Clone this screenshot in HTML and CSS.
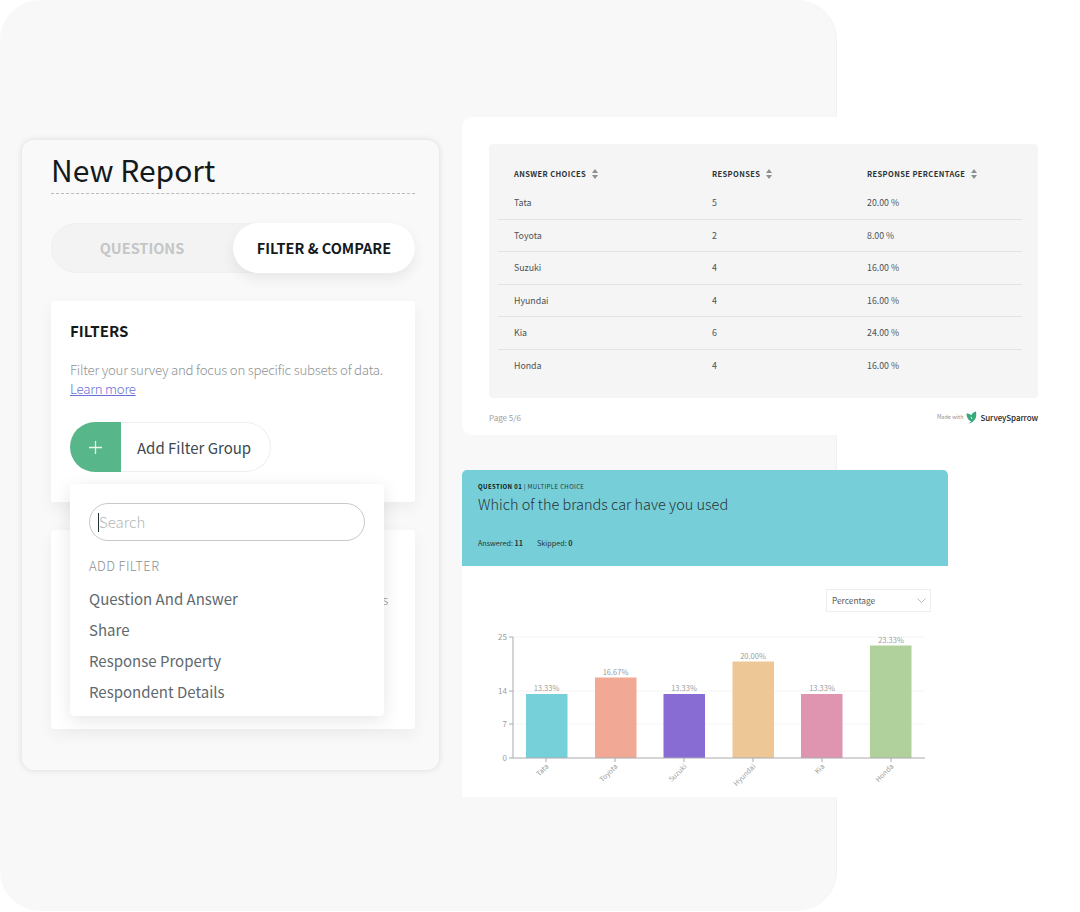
FILE: index.html
```html
<!DOCTYPE html>
<html lang="en">
<head>
    <meta charset="UTF-8">
    <meta name="viewport" content="width=device-width, initial-scale=1.0">
    <title>New Report</title>
    <link rel="stylesheet" href="styles.css">
</head>
<body>
    <div class="stage">
        <div class="panel">
            <div class="report-card">
                <h1 class="report-title">New Report</h1>

                <div class="toggle">
                    <span class="toggle-item">QUESTIONS</span>
                    <span class="toggle-item active">FILTER &amp; COMPARE</span>
                </div>

                <div class="box filters-box">
                    <h2>FILTERS</h2>
                    <p class="box-text">Filter your survey and focus on specific subsets of data.<br><a href="#">Learn more</a></p>
                    <div class="add-group">
                        <span class="add-icon">
                            <svg width="15" height="15" viewBox="0 0 15 15"><path d="M7.5 1v13M1 7.5h13" stroke="#e6f5ee" stroke-width="1.3" fill="none"/></svg>
                        </span>
                        <span class="add-label">Add Filter Group</span>
                    </div>
                </div>

                <div class="box compare-box">
                    <p class="compare-text">subsets</p>
                </div>

                <div class="filter-menu">
                    <div class="search-input"><span class="caret"></span>Search</div>
                    <div class="menu-heading">ADD FILTER</div>
                    <ul class="menu-list">
                        <li>Question And Answer</li>
                        <li>Share</li>
                        <li>Response Property</li>
                        <li>Respondent Details</li>
                    </ul>
                </div>
            </div>
        </div>

        <div class="sheet table-sheet">
            <div class="table-box">
                <div class="table-row table-head">
                    <span>ANSWER CHOICES <svg class="sort" width="6" height="10" viewBox="0 0 6 10"><path d="M3 0l3 4H0zM3 10L0 6h6z"/></svg></span>
                    <span>RESPONSES <svg class="sort" width="6" height="10" viewBox="0 0 6 10"><path d="M3 0l3 4H0zM3 10L0 6h6z"/></svg></span>
                    <span>RESPONSE PERCENTAGE <svg class="sort" width="6" height="10" viewBox="0 0 6 10"><path d="M3 0l3 4H0zM3 10L0 6h6z"/></svg></span>
                </div>
                <div class="table-row"><span>Tata</span><span>5</span><span>20.00 %</span></div>
                <div class="table-row"><span>Toyota</span><span>2</span><span>8.00 %</span></div>
                <div class="table-row"><span>Suzuki</span><span>4</span><span>16.00 %</span></div>
                <div class="table-row"><span>Hyundai</span><span>4</span><span>16.00 %</span></div>
                <div class="table-row"><span>Kia</span><span>6</span><span>24.00 %</span></div>
                <div class="table-row"><span>Honda</span><span>4</span><span>16.00 %</span></div>
            </div>
            <div class="sheet-footer">
                <span class="page-num">Page 5/6</span>
                <span class="made-with">Made with
                    <svg width="11" height="13" viewBox="0 0 11 13"><path d="M.5 2.500c2 0 3.500.6 4.800 1.800C6 2.500 7.500 1 10 .5c.6 4 .3 7.300-2.500 9.500-1.600 1.300-3 2.300-5 2.500 1-.6 2-1.300 2.700-2.200C2.500 9.500 .6 6.500.5 2.500z" fill="#35a978"/><path d="M4.500 5.500c1 .4 1.800 1.200 2 2.600-1.100-.4-1.800-1.300-2-2.600z" fill="#fff"/></svg>
                    <b>SurveySparrow</b></span>
            </div>
        </div>

        <div class="sheet chart-sheet">
            <div class="question-head">
                <div class="question-type"><b>QUESTION 01</b> | MULTIPLE CHOICE</div>
                <div class="question-title">Which of the brands car have you used</div>
                <div class="question-stats"><span>Answered: <b>11</b></span><span>Skipped: <b>0</b></span></div>
            </div>
            <div class="select-row">
                <div class="select-box">Percentage
                    <svg width="9" height="5" viewBox="0 0 9 5"><path d="M.5.5l4 4 4-4" stroke="#bbb" fill="none"/></svg>
                </div>
            </div>
            <svg class="chart" width="460" height="177" viewBox="480 620 460 177">
                <path d="M513 637H925M513 691H925M513 724H925" stroke="#f5f5f5"/>
                <rect x="526" y="694" width="41.500" height="64" fill="#76d0d9"/>
                <rect x="595" y="677.500" width="41.500" height="80.500" fill="#f1a894"/>
                <rect x="663.500" y="694" width="41.500" height="64" fill="#896bd4"/>
                <rect x="732.500" y="661.500" width="41.500" height="96.500" fill="#edc796"/>
                <rect x="801" y="694" width="41.500" height="64" fill="#df94b0"/>
                <rect x="870" y="645.500" width="41.500" height="112.500" fill="#b0d19c"/>
                <path d="M513 637V758H925M509 637h4M509 691h4M509 724h4M509 758h4M546 758v4M615 758v4M684 758v4M753 758v4M822 758v4M891 758v4" stroke="#aaaab0" fill="none"/>
                <g class="axis-y" text-anchor="end">
                    <text x="507" y="640">25</text>
                    <text x="507" y="693.500">14</text>
                    <text x="507" y="727">7</text>
                    <text x="507" y="761">0</text>
                </g>
                <g class="bar-value" text-anchor="middle">
                    <text x="546.500" y="691">13.33%</text>
                    <text x="615.500" y="675">16.67%</text>
                    <text x="684" y="691">13.33%</text>
                    <text x="753" y="659">20.00%</text>
                    <text x="822" y="691">13.33%</text>
                    <text x="891" y="643">23.33%</text>
                </g>
                <g class="axis-x" text-anchor="end">
                    <text transform="translate(549 767) rotate(-45)">Tata</text>
                    <text transform="translate(618 767) rotate(-45)">Toyota</text>
                    <text transform="translate(687 767) rotate(-45)">Suzuki</text>
                    <text transform="translate(756 767) rotate(-45)">Hyundai</text>
                    <text transform="translate(825 767) rotate(-45)">Kia</text>
                    <text transform="translate(894 767) rotate(-45)">Honda</text>
                </g>
            </svg>
        </div>
    </div>
</body>
</html>
```

FILE: styles.css
```css
* {
    box-sizing: border-box;
}

body {
    margin: 0;
    background: #fff;
    font-family: "Noto Sans CJK SC", "Noto Sans", sans-serif;
}

h1, h2, p, ul {
    margin: 0;
    padding: 0;
}

.stage {
    position: relative;
    width: 1080px;
    height: 912px;
    overflow: hidden;
}

.panel {
    width: 837px;
    height: 911px;
    padding: 140px 0 0 22px;
    background: #f8f8f8;
    border-radius: 40px;
    border-right: 1px solid #f1f1f1;
}

.report-card {
    position: relative;
    width: 417px;
    height: 630px;
    padding: 0 24px 0 29px;
    background: #f9f9f9;
    border-radius: 12px;
    box-shadow: 0 0 6px rgba(0, 0, 0, 0.12);
}

.report-title {
    height: 54px;
    padding-top: 9px;
    border-bottom: 1px dashed #bbb;
    font-size: 30px;
    font-weight: 400;
    line-height: 41px;
    color: #14191c;
}

.toggle {
    display: flex;
    justify-content: space-between;
    height: 50px;
    margin-top: 29px;
    background: #f3f3f3;
    border-radius: 25px;
    box-shadow: inset 0 0 3px rgba(0, 0, 0, 0.04);
}

.toggle-item {
    display: flex;
    align-items: center;
    justify-content: center;
    width: 182px;
    padding-bottom: 1px;
    font-size: 14.500px;
    font-weight: 700;
    color: #c4c6c6;
}

.toggle-item.active {
    background: #fff;
    border-radius: 25px;
    color: #14191c;
    box-shadow: 0 6px 14px rgba(0, 0, 0, 0.07);
}

.box {
    background: #fff;
    border-radius: 3px;
    box-shadow: 0 6px 16px rgba(0, 0, 0, 0.05);
}

.filters-box {
    height: 201px;
    margin-top: 28px;
    padding: 19px;
}

.filters-box h2 {
    font-size: 15px;
    font-weight: 700;
    line-height: 22px;
    color: #14191c;
}

.box-text {
    margin-top: 18px;
    font-size: 13.300px;
    font-weight: 300;
    line-height: 19px;
    letter-spacing: -0.25px;
    color: #8f9496;
    white-space: nowrap;
}

.box-text a {
    color: #6a70d8;
}

.add-group {
    display: flex;
    align-items: center;
    width: 201px;
    height: 50px;
    margin-top: 24px;
    border: 1px solid #eee;
    border-left: 0;
    border-radius: 25px;
}

.add-icon {
    display: flex;
    align-items: center;
    justify-content: center;
    width: 51px;
    height: 50px;
    background: #58b78a;
    border-radius: 25px 0 0 25px;
}

.add-label {
    margin-left: 16px;
    font-size: 15px;
    color: #3c4a50;
}

.compare-box {
    display: flex;
    justify-content: flex-end;
    height: 199px;
    margin-top: 28px;
    padding: 60px 27px 0 0;
}

.compare-text {
    font-size: 13.300px;
    font-weight: 300;
    line-height: 19px;
    letter-spacing: -0.25px;
    color: #8f9496;
    white-space: nowrap;
}

.filter-menu {
    position: absolute;
    left: 48px;
    top: 344px;
    width: 314px;
    height: 232px;
    padding: 19px;
    background: #fff;
    border-radius: 4px;
    box-shadow: 0 4px 18px rgba(0, 0, 0, 0.1);
}

.search-input {
    display: flex;
    align-items: center;
    width: 276px;
    height: 38px;
    padding: 0 0 2px 8px;
    border: 1px solid #c9c9c9;
    border-radius: 19px;
    font-size: 15px;
    font-weight: 300;
    color: #b4b7b8;
}

.caret {
    width: 1px;
    height: 19px;
    margin-top: 2px;
    background: #1f3036;
}

.menu-heading {
    margin-top: 15px;
    font-size: 13px;
    font-weight: 300;
    line-height: 20px;
    letter-spacing: 0.4px;
    color: #8c9193;
}

.menu-list {
    margin-top: 7px;
    list-style: none;
    font-size: 15px;
    line-height: 31px;
    color: #60696e;
}

.sheet {
    position: absolute;
    background: #fff;
}

.table-sheet {
    left: 462px;
    top: 117px;
    width: 602px;
    height: 318px;
    padding: 27px 26px 0 27px;
    border-radius: 10px;
}

.table-box {
    height: 254px;
    padding: 14px 16px 0 9px;
    background: #f5f5f5;
    border-radius: 4px;
}

.table-row {
    display: grid;
    grid-template-columns: 198px 155px 1fr;
    align-items: center;
    height: 32.500px;
    padding-left: 16px;
    border-bottom: 1px solid #e4e4e4;
    font-size: 8.800px;
    color: #4b5357;
}

.table-row:last-child {
    border-bottom: 0;
}

.table-head {
    height: 29px;
    padding-top: 2px;
    border-bottom: 0;
    font-size: 7.500px;
    font-weight: 700;
    letter-spacing: 0.4px;
    color: #2b3337;
}

.sort {
    margin-left: 4px;
    vertical-align: -2px;
    fill: #8b9093;
}

.sheet-footer {
    display: flex;
    align-items: center;
    justify-content: space-between;
    height: 38px;
}

.page-num {
    font-size: 8px;
    color: #9a9d9f;
}

.made-with {
    display: flex;
    align-items: center;
    gap: 3px;
    font-size: 5.500px;
    color: #8b8f91;
}

.made-with b {
    font-size: 8px;
    font-weight: 500;
    letter-spacing: -0.1px;
    color: #1d2427;
}

.chart-sheet {
    left: 462px;
    top: 470px;
    width: 486px;
    height: 327px;
    border-radius: 5px 5px 0 0;
}

.question-head {
    height: 96px;
    padding: 11px 16px 0;
    background: #76cfd8;
    border-radius: 5px 5px 0 0;
    color: #2a3236;
}

.question-type {
    font-size: 6px;
    line-height: 12px;
    letter-spacing: 0.4px;
}

.question-type b {
    color: #0d1214;
}

.question-title {
    font-size: 14.500px;
    font-weight: 300;
    line-height: 21px;
}

.question-stats {
    display: flex;
    gap: 14px;
    margin-top: 23px;
    font-size: 7.200px;
    line-height: 12px;
}

.select-row {
    display: flex;
    justify-content: flex-end;
    padding: 23px 17px 0 0;
}

.select-box {
    display: flex;
    align-items: center;
    justify-content: space-between;
    width: 105px;
    height: 23px;
    padding: 0 4px 1px 5px;
    border: 1px solid #eee;
    font-size: 8.300px;
    color: #555c60;
}

.chart {
    display: block;
    margin: 8px 0 0 18px;
}

.chart text {
    fill: #9a9da0;
}

.axis-y {
    font-size: 8px;
}

.bar-value {
    font-size: 7.500px;
}

.axis-x {
    font-size: 7px;
}
```
